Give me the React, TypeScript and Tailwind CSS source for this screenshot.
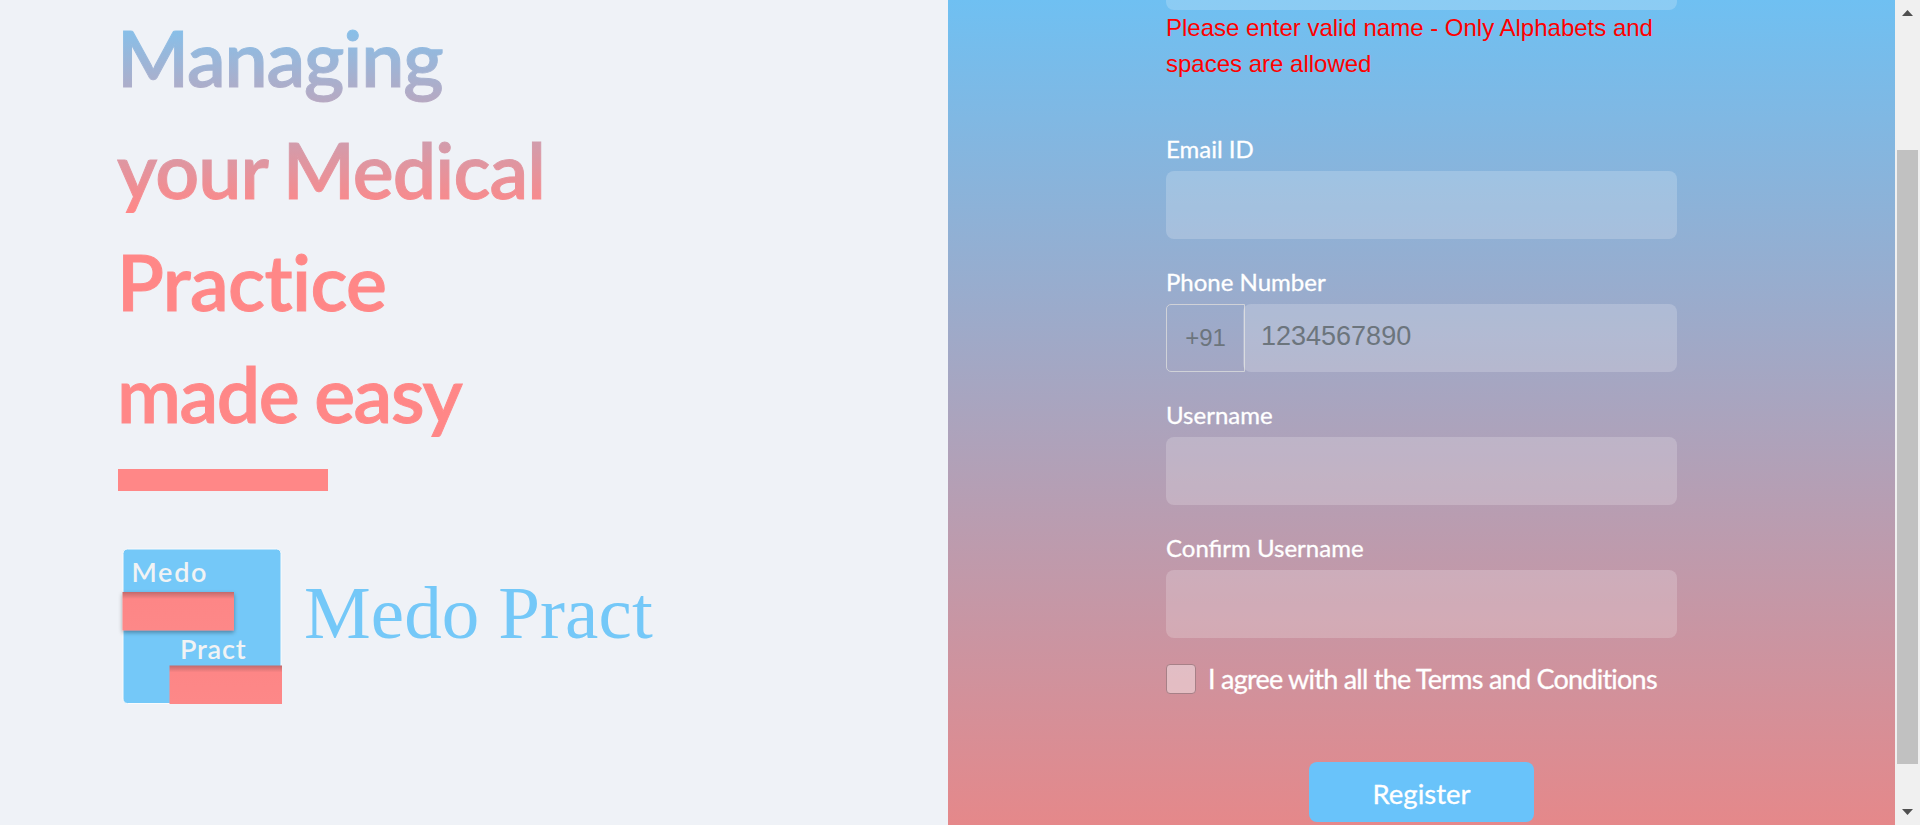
import React from "react";

function Logo() {
  return (
    <svg width="168" height="164" viewBox="0 0 168 164" className="block shrink-0">
      <defs>
        <filter id="drop" x="-10%" y="-20%" width="120%" height="150%">
          <feDropShadow dx="0" dy="2" stdDeviation="2" floodColor="#000" floodOpacity="0.35" />
        </filter>
        <linearGradient id="shade" x1="0" y1="0" x2="0" y2="1">
          <stop offset="0" stopColor="#c26a6c" />
          <stop offset="0.18" stopColor="#fd8686" />
          <stop offset="1" stopColor="#fd8888" />
        </linearGradient>
      </defs>
      <rect x="5" y="4" width="158" height="154.500" rx="4.500" fill="#74c8f8" stroke="#f8fbfd" strokeWidth="1" />
      <rect x="4.500" y="47" width="111.500" height="38.500" fill="url(#shade)" filter="url(#drop)" />
      <rect x="51.500" y="120.500" width="112.500" height="38.500" fill="url(#shade)" />
      <text x="13.500" y="37" textLength="75" fontSize="27" fontWeight="600" fontFamily="Lato, sans-serif" fill="#f1f3f4">Medo</text>
      <text x="62" y="113.500" textLength="65.500" fontSize="27" fontWeight="600" fontFamily="Lato, sans-serif" fill="#f1f3f4">Pract</text>
    </svg>
  );
}

function Field({ label, children }: { label: string; children?: React.ReactNode }) {
  return (
    <div className="h-[133px]">
      <label className="block h-[39px] text-[24px] leading-[34px] [-webkit-text-stroke:0.3px_white]">{label}</label>
      {children ?? <input className="block h-[68px] w-full rounded-lg bg-white/20 px-4 outline-none" />}
    </div>
  );
}

export default function App() {
  return (
    <div className="flex h-[825px] w-[1920px] overflow-hidden bg-[#eff2f7] font-[Lato,sans-serif]">
      <section className="w-[948px] pl-[117px] pt-[1px]">
        <h1 className="h-[448px] w-[600px] bg-linear-[180deg,#74c8f8_0px,#ff8787_210px] bg-clip-text text-[77px] leading-[112px] font-semibold text-transparent [-webkit-text-stroke:1px_transparent] [font-variant-ligatures:none]">
          <span className="tracking-[-1.15px]">Managing</span>
          <br />
          <span className="tracking-[-0.9px] [word-spacing:-2px]">your Medical</span>
          <br />
          <span className="tracking-[-0.6px]">Practice</span>
          <br />
          <span className="tracking-[-1.4px] [word-spacing:-2px]">made easy</span>
        </h1>
        <div className="mt-[20px] ml-px h-[22px] w-[210px] bg-[#ff8787]" />
        <div className="mt-[54px] ml-px flex">
          <Logo />
          <span className="ml-[18px] mt-[25px] font-['Liberation_Serif',serif] text-[75px] leading-[86px] tracking-[0.1px] whitespace-nowrap text-[#74c8f8]">
            Medo Pract
          </span>
        </div>
      </section>

      <section className="flex w-[947px] justify-center bg-linear-[180deg,#6fc0f2,#e5888a] text-white">
        <form className="w-[511px]">
          <div className="h-[10px] rounded-b-lg bg-white/20" />
          <p className="h-[122px] font-['Liberation_Sans',sans-serif] text-[24px] leading-[36px] text-[#ff0000]">
            Please enter valid name - Only Alphabets and spaces are allowed
          </p>
          <Field label="Email ID" />
          <Field label="Phone Number">
            <div className="flex h-[68px] font-['Liberation_Sans',sans-serif]">
              <span className="flex w-[79px] items-center justify-center rounded-l-[5px] border border-[#d0d2d8] text-[24px] text-[#6c757d]">
                +91
              </span>
              <input
                placeholder="1234567890"
                className="-ml-[2px] h-[68px] min-w-0 flex-1 rounded-lg bg-white/20 pr-4 pb-[4px] pl-[18px] text-[27px] outline-none placeholder:text-[#6c757d]"
              />
            </div>
          </Field>
          <Field label="Username" />
          <Field label="Confirm Username" />
          <div className="flex h-[30px] items-center">
            <span className="h-[30px] w-[30px] shrink-0 rounded-[4px] border border-[#a78087] bg-white/40" />
            <span className="ml-[12px] text-[27px] leading-[30px] tracking-[-0.75px] whitespace-nowrap [-webkit-text-stroke:0.3px_white] [font-variant-ligatures:none]">
              I agree with all the Terms and Conditions
            </span>
          </div>
          <button
            type="button"
            className="mx-auto mt-[68px] block h-[60px] w-[225px] rounded-lg bg-[#69c3fa] pt-1 text-[27.5px] [-webkit-text-stroke:0.3px_white]"
          >
            Register
          </button>
        </form>
      </section>

      <div className="flex w-[25px] flex-col items-center bg-[#f0f0f0]">
        <svg width="11" height="6" className="mt-[10px]">
          <path d="M5.500 0L11 6H0z" fill="#505050" />
        </svg>
        <div className="mt-[134px] h-[614px] w-[21px] bg-[#c1c1c1]" />
        <svg width="11" height="6" className="mt-[45px]">
          <path d="M5.500 6L11 0H0z" fill="#505050" />
        </svg>
      </div>
    </div>
  );
}
